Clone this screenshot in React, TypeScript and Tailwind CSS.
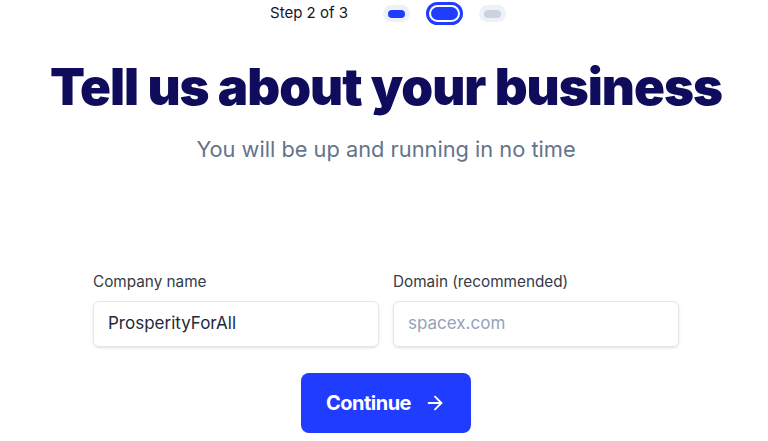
import React from "react";

export default function App() {
  return (
    <div className="w-[768px] h-[441px] bg-white overflow-hidden pl-[4px]" style={{ fontFamily: "Inter, 'Noto Sans', sans-serif" }}>
      <div className="flex flex-col items-center">
        <div className="h-[27px] flex items-center gap-[16px] pl-[4px]">
          <span className="text-[15px] text-[#111827] mr-[19px]">Step 2 of 3</span>
          <div className="w-[27px] h-[17px] rounded-full bg-[#eef1f7] flex items-center justify-center">
            <div className="w-[17px] h-[8px] rounded-full bg-[#1f3cff]" />
          </div>
          <div className="w-[37px] h-[23px] rounded-full border-[3px] border-[#1f3cff] p-[2px] flex">
            <div className="flex-1 rounded-full bg-[#1f3cff]" />
          </div>
          <div className="w-[27px] h-[17px] rounded-full bg-[#eef1f7] flex items-center justify-center">
            <div className="w-[17px] h-[8px] rounded-full bg-[#cbd3de]" />
          </div>
        </div>
        <h1 className="mt-[29px] text-[51px] leading-[62px] font-black tracking-[-0.98px] text-[#0f0c5c]">
          Tell us about your business
        </h1>
        <p className="mt-[16px] text-[21.8px] leading-[30px] text-[#64748b]">You will be up and running in no time</p>
        <div className="mt-[108px] flex gap-[14px]">
          <div className="flex flex-col w-[286px]">
            <label className="text-[15.3px] leading-[20px] text-[#333a45]">Company name</label>
            <div className="mt-[9px] h-[46px] rounded-[6px] border border-[#e2e8f0] shadow-sm flex items-center px-[14px] text-[17px] text-[#1e293b]">
              ProsperityForAll
            </div>
          </div>
          <div className="flex flex-col w-[286px]">
            <label className="text-[15.3px] leading-[20px] text-[#333a45]">Domain (recommended)</label>
            <div className="mt-[9px] h-[46px] rounded-[6px] border border-[#e2e8f0] shadow-sm flex items-center px-[14px] text-[17px] text-[#94a3b8]">
              spacex.com
            </div>
          </div>
        </div>
        <button className="mt-[26px] w-[170px] h-[60px] rounded-[8px] bg-[#1f3cff] text-white flex items-center justify-center gap-[13px] text-[20px] font-bold">
          <span className="tracking-[-0.5px]">Continue</span>
          <svg width="22" height="22" viewBox="0 0 24 24" fill="none" stroke="currentColor" strokeWidth="2" strokeLinecap="round" strokeLinejoin="round">
            <path d="M5 12h14" />
            <path d="M12 5l7 7-7 7" />
          </svg>
        </button>
      </div>
    </div>
  );
}
